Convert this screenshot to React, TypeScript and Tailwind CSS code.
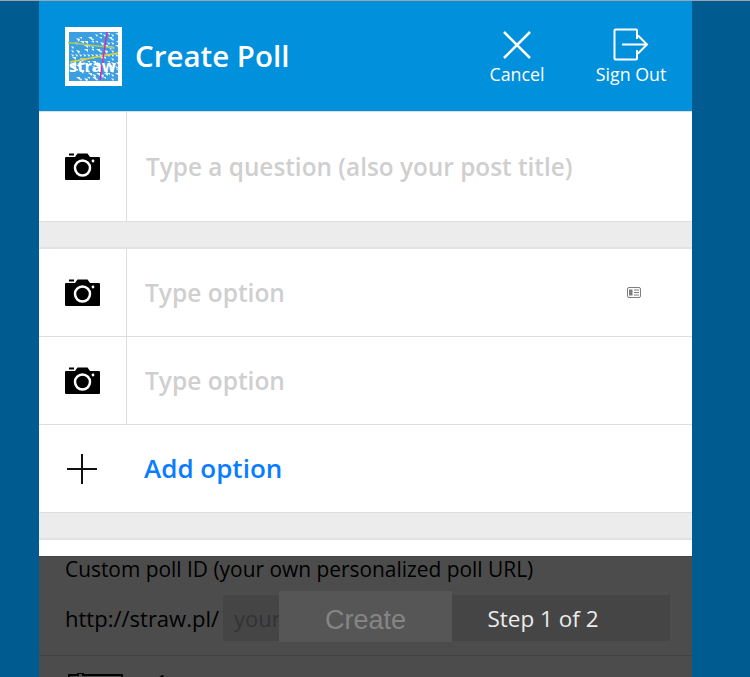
const sans = "font-['Open_Sans','Noto_Sans',sans-serif]"

function Camera() {
  return (
    <svg width="35" height="27" viewBox="0 0 35 27" className="block">
      <rect x="4" y="0.500" width="5" height="2" fill="#000" />
      <path d="M1 4h9l2.500-3.500h10L25 4h9a1 1 0 0 1 1 1v21a1 1 0 0 1-1 1H1a1 1 0 0 1-1-1V5a1 1 0 0 1 1-1z" fill="#000" />
      <circle cx="17.500" cy="15" r="7.500" fill="none" stroke="#fff" strokeWidth="2.500" />
      <circle cx="28" cy="8" r="1.400" fill="#fff" />
    </svg>
  )
}

function CameraCell({ h }: { h: string }) {
  return (
    <div className={`w-[88px] ${h} shrink-0 flex items-center justify-center border-r border-[#dedede] pr-[1px]`}>
      <Camera />
    </div>
  )
}

// mottled straw texture for the logo
const specks: string[] = []
for (let y = 0; y < 12; y++) {
  for (let x = 0; x < 12; x++) {
    const n = (x * 37 + y * 91 + x * y * 13) % 17
    if (n % 3 === 0) continue
    const px = 5 + x * 4 + (n % 3)
    const py = 6 + y * 4 + (n % 2)
    specks.push(`M${px} ${py}l${2 + (n % 3)} ${n % 2}l-${n % 2} ${1 + (n % 3)}z`)
  }
}

function Logo() {
  return (
    <svg width="57" height="59" viewBox="0 0 57 59" className="block shrink-0">
      <rect width="57" height="59" fill="#fff" />
      <rect x="4" y="5" width="49" height="49" fill="#3c9fe2" />
      {specks.map((d) => (
        <path key={d} d={d} fill="#eaf5fc" />
      ))}
      <path d="M3 15.500l47 5.500" stroke="#a5c860" strokeWidth="1.500" />
      <path d="M5 35l48-9" stroke="#e6d42a" strokeWidth="1.500" />
      <path d="M42 5l-7 48" stroke="#dd2aa8" strokeWidth="1.500" />
      <text x="27.500" y="45" textAnchor="middle" fontSize="16.500" fontFamily="'Open Sans', sans-serif" fontWeight="700" fill="#fff">
        straw
      </text>
    </svg>
  )
}

function Header() {
  return (
    <div className="h-[110px] bg-[#0090dc] flex items-center justify-between pl-[26px] pr-[4px]">
      <div className="flex items-center gap-[13px] mt-[1px]">
        <Logo />
        <h1 className="text-[29.500px] font-semibold text-white leading-none mt-[-2px]">Create Poll</h1>
      </div>
      <div className="flex items-start mt-[3px] whitespace-nowrap">
        <div className="w-[114px] flex flex-col items-center">
          <svg width="30" height="30" viewBox="0 0 30 30" className="block">
            <path d="M2 2l26 26M28 2L2 28" stroke="#fff" strokeWidth="2.500" fill="none" />
          </svg>
          <span className="text-white text-[17.800px] leading-[24px] mt-[2px]">Cancel</span>
        </div>
        <div className="w-[114px] flex flex-col items-center mt-[-2px]">
          <svg width="36" height="34" viewBox="0 0 36 34" className="block">
            <path d="M24 11V2.500a1 1 0 0 0-1-1H2.500a1 1 0 0 0-1 1v28a1 1 0 0 0 1 1H23a1 1 0 0 0 1-1V22" stroke="#fff" strokeWidth="2" fill="none" />
            <path d="M9 16.500h25M25 7.500l9 9-9 9" stroke="#fff" strokeWidth="2" fill="none" />
          </svg>
          <span className="text-white text-[17.800px] leading-[24px]">Sign Out</span>
        </div>
      </div>
    </div>
  )
}

function OptionRow({ card }: { card?: boolean }) {
  return (
    <div className="flex items-center border-b border-[#dedede]">
      <CameraCell h="h-[87px]" />
      <div className="flex-1 pl-[18px] pt-[2px] text-[24.500px] text-[#cfcfcf] font-semibold leading-none">Type option</div>
      {card && (
        <svg width="14" height="11" viewBox="0 0 14 11" className="block mr-[51px]">
          <rect x="0.500" y="0.500" width="13" height="10" rx="1.500" fill="#fff" stroke="#7d7d7d" />
          <rect x="2" y="2.500" width="3.500" height="6" fill="#7d7d7d" />
          <path d="M7 3h5M7 5.500h5M7 8h5" stroke="#7d7d7d" />
        </svg>
      )}
    </div>
  )
}

function Band() {
  return <div className="h-[27px] bg-[#ececec] border-b-2 border-[#e2e2e2]" />
}

export default function App() {
  return (
    <div className={`relative h-[677px] overflow-hidden bg-[#005b90] ${sans}`}>
      <div className="h-px bg-[#9aa5ad]" />
      <div className="ml-[39px] w-[653px] bg-white">
        <Header />
        <div className="flex items-center border-b border-[#dedede] border-t">
          <CameraCell h="h-[109px]" />
          <div className="pl-[19px] pt-[2px] text-[24.350px] text-[#cfcfcf] font-semibold leading-none">
            Type a question (also your post title)
          </div>
        </div>
        <Band />
        <OptionRow card />
        <OptionRow />
        <div className="h-[88px] flex items-center border-b border-[#dedede]">
          <div className="w-[88px] flex justify-center pr-[2px]">
            <svg width="32" height="32" viewBox="0 0 32 32" className="block">
              <path d="M16 1v30M1 16h30" stroke="#111" strokeWidth="2" />
            </svg>
          </div>
          <span className="pl-[17px] pb-[2px] text-[26px] font-semibold text-[#0a7dff] leading-none">Add option</span>
        </div>
        <Band />
        <div className="px-[26px] pt-[17px] text-[20.900px] leading-[24px] text-black whitespace-nowrap">
          Custom poll ID (your own personalized poll URL)
        </div>
        <div className="flex items-center pl-[26px] pr-[22px] mt-[14px] border-b border-[#dedede] pb-[14px]">
          <span className="text-[22px] font-medium text-black w-[158px] shrink-0 whitespace-nowrap">http://straw.pl/</span>
          <div className="flex-1 h-[46px] bg-[#e6e6e6] pl-[11px] flex items-center text-[22px] text-[#aaaaaa]">your</div>
        </div>
        <div className="flex items-start pl-[29px] pt-[17px] h-[40px]">
          <svg width="55" height="20" viewBox="0 0 55 20" className="block shrink-0">
            <path d="M1 20V2h9V0h5v2h39v18" fill="none" stroke="#000" strokeWidth="2" />
          </svg>
          <span className="ml-[33px] text-[21px] text-black leading-none">1</span>
        </div>
      </div>

      {/* bar over the form */}
      <div className="absolute left-[39px] top-[556px] bottom-0 w-[653px] bg-black/70 border-t border-[#444]">
        <div className="absolute left-[240px] top-[34px] w-[173px] h-[51px] bg-[#565656] flex items-center justify-center pt-[7px] font-['Liberation_Sans',sans-serif] text-[27px] text-[#858585]">
          Create
        </div>
        <div className="absolute left-[414px] top-[39px] w-[180px] h-[46px] flex items-center justify-center font-medium text-[22.500px] text-[#ebebeb]">
          Step 1 of 2
        </div>
      </div>
    </div>
  )
}
